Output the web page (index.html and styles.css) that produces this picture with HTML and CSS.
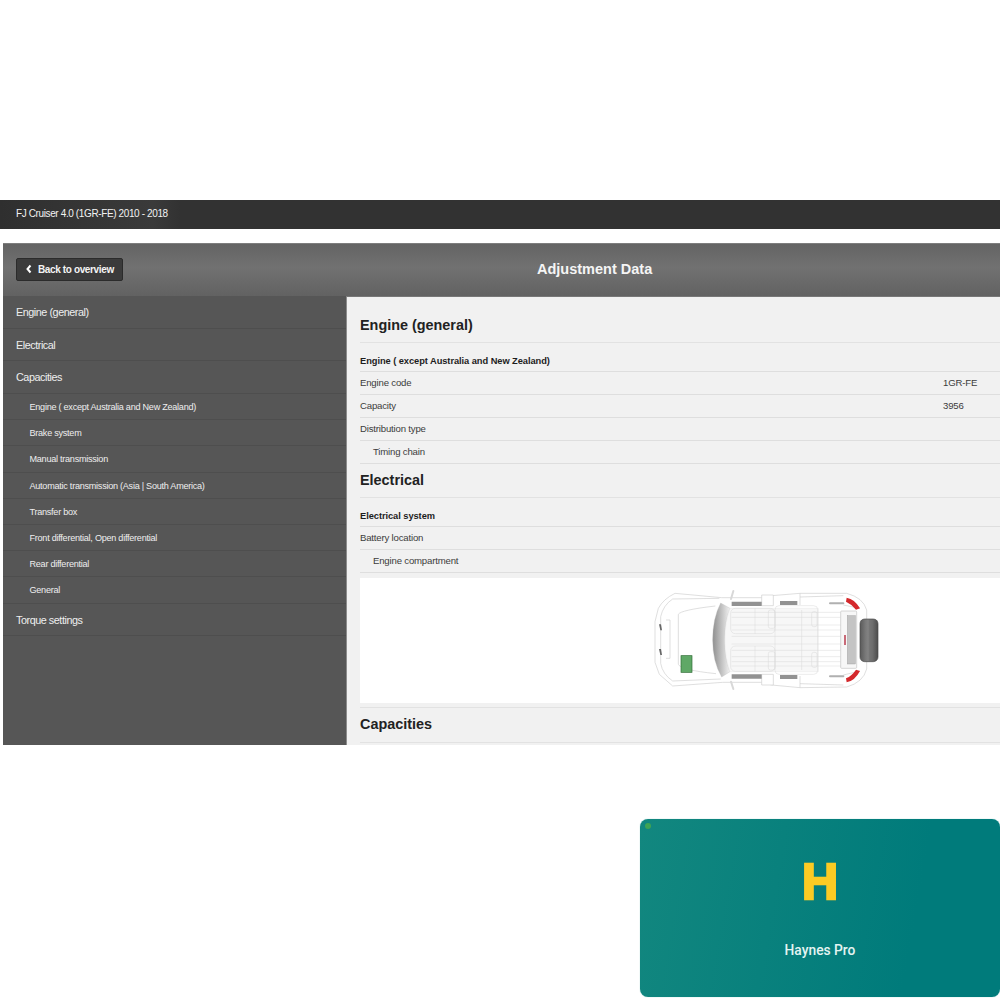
FILE: index.html
```html
<!DOCTYPE html>
<html lang="en">
<head>
<meta charset="utf-8">
<title>Adjustment Data</title>
<link rel="stylesheet" href="styles.css">
</head>
<body>
<div class="topbar"><div class="tab">FJ Cruiser 4.0 (1GR-FE) 2010 - 2018</div></div>
<main class="app">
  <header class="apphead">
    <a class="back"><svg class="chev" viewBox="0 0 8 10"><path d="M5.500 1.500 2.500 5l3 3.500" fill="none" stroke="#fff" stroke-width="2"/></svg>Back to overview</a>
    <h1>Adjustment Data</h1>
  </header>
  <div class="cols">
    <nav class="side">
      <div class="n1">Engine (general)</div>
      <div class="n1">Electrical</div>
      <div class="n1">Capacities</div>
      <div class="n2">Engine ( except Australia and New Zealand)</div>
      <div class="n2">Brake system</div>
      <div class="n2">Manual transmission</div>
      <div class="n2">Automatic transmission (Asia | South America)</div>
      <div class="n2">Transfer box</div>
      <div class="n2">Front differential, Open differential</div>
      <div class="n2">Rear differential</div>
      <div class="n2">General</div>
      <div class="n1">Torque settings</div>
    </nav>
    <section class="content">
      <h2 class="h-first">Engine (general)</h2>
      <div class="row bold">Engine ( except Australia and New Zealand)</div>
      <div class="row"><span>Engine code</span><span class="val">1GR-FE</span></div>
      <div class="row"><span>Capacity</span><span class="val">3956</span></div>
      <div class="row">Distribution type</div>
      <div class="row ind">Timing chain</div>
      <h2 class="h-elec">Electrical</h2>
      <div class="row bold">Electrical system</div>
      <div class="row">Battery location</div>
      <div class="row ind">Engine compartment</div>
      <div class="pic">
        <svg class="car" viewBox="0 9 810 375">
          <defs>
            <linearGradient id="glass" x1="0" x2="1" y1="0" y2="0">
              <stop offset="0" stop-color="#8f8f8f"/>
              <stop offset="1" stop-color="#f2f2f2"/>
            </linearGradient>
            <linearGradient id="tyre" x1="0" x2="1" y1="0" y2="0">
              <stop offset="0" stop-color="#5a5a5a"/>
              <stop offset=".35" stop-color="#7d7d7d"/>
              <stop offset=".7" stop-color="#6d6d6d"/>
              <stop offset="1" stop-color="#4c4c4c"/>
            </linearGradient>
          </defs>
          <g fill="#fff" stroke="#cfcfcf" stroke-width="2">
            <path d="M275 68 L135 55 Q100 72 85 100 L75 140 V262 L88 298 L128 333 L278 322 L300 322 L395 322 L425 330 L510 338 L650 336 Q700 322 710 282 V105 Q700 68 650 55 L510 55 L425 62 L395 68 L300 68 Z"/>
            <path d="M128 72 L268 70 M128 72 Q100 90 92 125 V265 Q98 298 128 318 L272 312" fill="none"/>
            <path d="M145 118 Q152 105 256 93 M145 118 V268 Q152 285 258 296" fill="none"/>
            <path d="M108 135 H120 V250 H108" fill="none"/>
            <path d="M510 66 L640 62 M510 326 L640 330 M510 55 V90 M510 338 V303 M640 90 L690 100 M640 300 L690 288" fill="none"/>
            <path d="M395 60 H430 V92 H395Z M395 298 H430 V330 H395Z"/>
          </g>
          <path d="M310 48 L303 72 M310 342 L303 320" stroke="#d8d8d8" stroke-width="6" stroke-linecap="round" fill="none"/>
          <path d="M272 84 Q248 130 248 195 Q248 260 275 306 L300 290 Q284 250 284 195 Q284 140 300 100Z" fill="url(#glass)" stroke="#bbb"/>
          <path d="M305 80 H395 V93 H305Z M305 298 H395 V311 H305Z M450 78 H502 V90 H450Z M450 300 H502 V312 H450Z" fill="#929292"/>
          <path d="M300 100 H565 V290 H300 Q285 250 285 195 Q285 140 300 100Z" fill="#f7f7f7" stroke="#e2e2e2"/>
          <g fill="none" stroke="#d9d9d9" stroke-width="1.500">
            <rect x="302" y="100" width="133" height="76" rx="14"/>
            <rect x="302" y="213" width="133" height="76" rx="14"/>
            <rect x="435" y="92" width="128" height="206" rx="12"/>
            <rect x="415" y="105" width="20" height="55" rx="6"/>
            <rect x="415" y="230" width="20" height="55" rx="6"/>
            <rect x="545" y="110" width="16" height="45" rx="6"/>
            <rect x="545" y="232" width="16" height="45" rx="6"/>
            <path d="M305 112 H632 M305 127 H632 M305 150 H632 M305 165 H632 M305 184 H632 M305 207 H632 M305 226 H632 M305 245 H632 M305 260 H632 M305 273 H632 M515 105 V285 M375 100 V176 M375 213 V289"/>
          </g>
          <rect x="632" y="108" width="48" height="172" rx="3" fill="#f7f7f7" stroke="#c4c4c4" stroke-width="2"/>
          <rect x="652" y="122" width="24" height="145" fill="#c4c4c4" stroke="#8d8d8d"/>
          <rect x="642" y="180" width="6" height="30" fill="#c96a78"/>
          <path d="M650 68 Q674 72 690 100 L678 104 Q666 88 648 80Z M650 322 Q674 318 690 288 L678 284 Q666 302 648 310Z" fill="#d4282c"/>
          <rect x="690" y="132" width="54" height="128" rx="14" fill="url(#tyre)" stroke="#4a4a4a" stroke-width="2"/>
          <path d="M714 134 V258" stroke="#8f8f8f" stroke-width="2"/>
          <path d="M600 85 H640 M600 304 H640" stroke="#b0b0b0" stroke-width="6" stroke-linecap="round"/>
          <path d="M87 148 L91 166 H96 L93 148Z M87 222 L91 240 H96 L93 222Z" fill="#666"/>
          <rect x="153" y="242" width="33" height="50" fill="#5fa866" stroke="#2f6b34" stroke-width="2"/>
        </svg>
      </div>
      <h2 class="h-cap">Capacities</h2>
    </section>
  </div>
</main>
<aside class="promo">
  <span class="dot"></span>
  <div class="logo">H</div>
  <div class="name">Haynes Pro</div>
</aside>
</body>
</html>
```

FILE: styles.css
```css
html, body { margin: 0; padding: 0; }
body {
  width: 1000px;
  height: 1000px;
  overflow: hidden;
  background: #fff;
  font-family: "Liberation Sans", Arial, sans-serif;
  padding-top: 200px;
  box-sizing: border-box;
}
.topbar {
  height: 29px;
  background: #323232;
  display: flex;
}
.tab {
  width: 164px;
  padding-left: 16px;
  background: linear-gradient(90deg, #2f2f2f, #3a3a3a 85%, #323232);
  color: #f2f2f2;
  font-size: 10px;
  letter-spacing: -0.38px;
  white-space: nowrap;
  line-height: 27px;
}
.app {
  margin: 14px 0 0 3px;
  height: 502px;
  display: flex;
  flex-direction: column;
  background: #585858;
}
.apphead {
  height: 53px;
  flex: none;
  display: flex;
  align-items: center;
  padding: 0 0 2px 13px;
  background: linear-gradient(#646464, #717171 45%, #626262);
  border-top: 1px solid #7e7e7e;
  box-sizing: border-box;
  position: relative;
}
.back {
  width: 107px;
  height: 23px;
  box-sizing: border-box;
  background: #3b3b3b;
  border: 1px solid #2b2b2b;
  border-radius: 2px;
  color: #f4f4f4;
  font-size: 10px;
  letter-spacing: -0.37px;
  font-weight: bold;
  display: flex;
  align-items: center;
  padding-left: 8px;
  gap: 5px;
}
.chev { width: 8px; height: 10px; flex: none; }
.apphead h1 {
  margin: 0;
  position: absolute;
  left: 534px;
  top: 15px;
  font-size: 14.500px;
  line-height: 20px;
  font-weight: bold;
  color: #f5f5f5;
}
.cols { flex: 1; display: flex; min-height: 0; }
.side {
  width: 343px;
  flex: none;
  background: #565656;
  color: #eee;
}
.n1 {
  height: 32.700px;
  box-sizing: border-box;
  line-height: 32px;
  padding-left: 13px;
  font-size: 10.800px;
  letter-spacing: -0.45px;
  border-bottom: 1px solid #4e4e4e;
}
.n2 {
  height: 26.200px;
  box-sizing: border-box;
  line-height: 27px;
  padding-left: 26.500px;
  font-size: 9.100px;
  letter-spacing: -0.26px;
  border-bottom: 1px solid #4e4e4e;
}
.content {
  flex: 1;
  background: #f1f1f1;
  padding-left: 13px;
  color: #3c3c3c;
  border-left: 1px solid #8c8c8c;
  border-top: 1px solid #777;
  overflow: hidden;
}
h2 {
  margin: 0;
  font-size: 14.400px;
  font-weight: bold;
  color: #222;
  border-bottom: 1px solid #e2e2e2;
}
.h-first { height: 45px; line-height: 56px; }
.h-elec { height: 33px; line-height: 32px; }
.h-cap { height: 34px; line-height: 33px; border-top: 1px solid #e2e2e2; margin-top: 4px; }
.row {
  height: 23px;
  box-sizing: border-box;
  line-height: 22px;
  font-size: 9.600px;
  letter-spacing: -0.18px;
  border-bottom: 1px solid #dedede;
  display: flex;
}
.bold {
  height: 29px;
  line-height: 36px;
  font-weight: bold;
  color: #1d1d1d;
  font-size: 9.300px;
  letter-spacing: -0.06px;
}
.ind { padding-left: 13px; }
.val { margin-left: auto; width: 57px; }
.pic {
  height: 125px;
  margin-top: 5px;
  background: #fff;
  padding-left: 270px;
}
.car { width: 270px; height: 125px; display: block; }
.promo {
  position: absolute;
  left: 640px;
  top: 819px;
  width: 360px;
  height: 178px;
  border-radius: 8px;
  background: linear-gradient(100deg, #12877f, #007b7b 75%);
  box-shadow: 0 0 1px #6fbcb8;
  display: flex;
  flex-direction: column;
  align-items: center;
}
.dot {
  position: absolute;
  left: 5px;
  top: 4px;
  width: 6px;
  height: 6px;
  border-radius: 50%;
  background: #3fa354;
}
.logo {
  margin-top: 28px;
  height: 70px;
  font-weight: bold;
  font-size: 50px;
  line-height: 70px;
  color: #fccb24;
  -webkit-text-stroke: 2.500px #fccb24;
}
.name {
  margin-top: 25px;
  font-family: Roboto, sans-serif;
  font-weight: 500;
  font-size: 13.800px;
  color: #e4f4f2;
}
```
